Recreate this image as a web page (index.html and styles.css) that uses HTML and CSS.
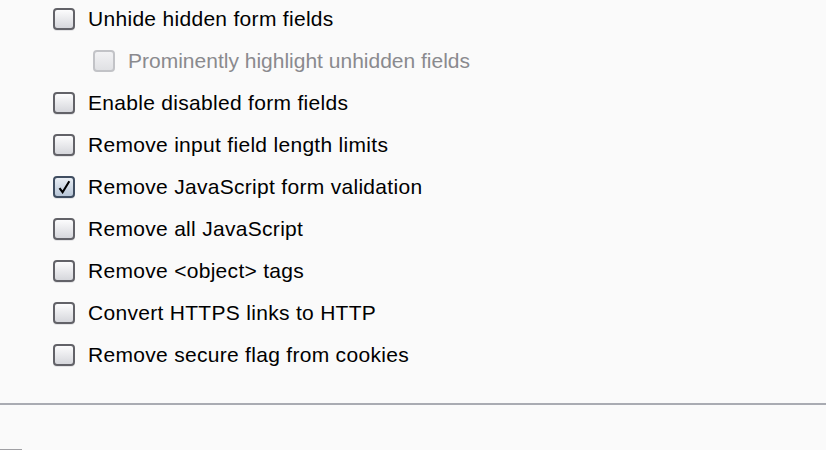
FILE: index.html
```html
<!DOCTYPE html>
<html lang="en">
<head>
  <meta charset="UTF-8" />
  <title>Form options</title>
  <link rel="stylesheet" href="styles.css">
</head>
<body>
  <ul class="options">
    <li class="option"><span class="box"></span><span>Unhide hidden form fields</span></li>
    <li class="option sub disabled"><span class="box"></span><span>Prominently highlight unhidden fields</span></li>
    <li class="option"><span class="box"></span><span>Enable disabled form fields</span></li>
    <li class="option"><span class="box"></span><span>Remove input field length limits</span></li>
    <li class="option checked">
      <span class="box">
        <svg width="13" height="14" viewBox="0 0 13 14"><path d="M1.5 8.2 L4.6 12.2 L11.3 1.2" fill="none" stroke="#000" stroke-width="2.1" stroke-linejoin="miter"/></svg>
      </span>
      <span>Remove JavaScript form validation</span>
    </li>
    <li class="option"><span class="box"></span><span>Remove all JavaScript</span></li>
    <li class="option"><span class="box"></span><span>Remove &lt;object&gt; tags</span></li>
    <li class="option"><span class="box"></span><span>Convert HTTPS links to HTTP</span></li>
    <li class="option"><span class="box"></span><span>Remove secure flag from cookies</span></li>
  </ul>

  <hr class="divider">

  <div class="footer">
    <div class="cut-button"></div>
  </div>
</body>
</html>
```

FILE: styles.css
```css
html, body {
  margin: 0;
  padding: 0;
  height: 100%;
  overflow: hidden;
}

body {
  background: #fafafa;
  font-family: "Liberation Sans", Arial, sans-serif;
  font-size: 21px;
  letter-spacing: 0.3px;
  color: #000;
}

.options {
  list-style: none;
  margin: -2px 0 0 0;
  padding: 0 0 0 53px;
}

.option {
  display: flex;
  align-items: center;
  gap: 13px;
  height: 42px;
}

.option.sub {
  padding-left: 40px;
}

.option.sub span + span {
  letter-spacing: 0;
}

.box {
  box-sizing: border-box;
  width: 22px;
  height: 22px;
  border: 2px solid #626268;
  border-radius: 4px;
  background: linear-gradient(#fcfcfd, #d6d7dc);
  box-shadow: 0 1px 0 #e4e4e6;
  display: flex;
  align-items: center;
  justify-content: center;
  flex-shrink: 0;
}

.option.disabled {
  color: #8a8a8e;
}

.option.disabled .box {
  border-color: #c2c3c7;
  background: linear-gradient(#f2f2f4, #e0e1e4);
  box-shadow: none;
}

.option.checked .box {
  border-color: #3f4d60;
  background: linear-gradient(#e9eef4, #b7c5d6);
}

.divider {
  margin: 27px 0 0 0;
  border: 0;
  height: 2px;
  background: #a9abb2;
}

.footer {
  padding-top: 44px;
}

.cut-button {
  width: 22px;
  height: 6px;
  border-top: 1px solid #a0a0a4;
  background: linear-gradient(90deg, #c8c8ca, #fafafa);
}
```
